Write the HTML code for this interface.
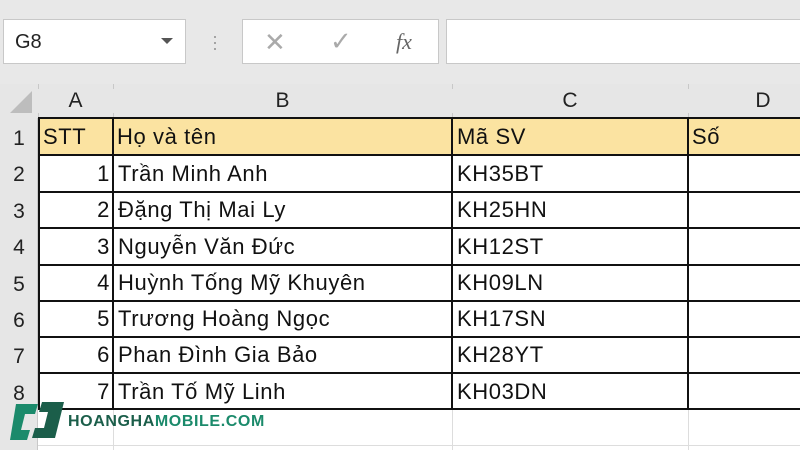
<!DOCTYPE html>
<html><head><meta charset="utf-8"><style>
*{margin:0;padding:0;box-sizing:border-box}
body{width:800px;height:450px;overflow:hidden;background:#fff;font-family:"Liberation Sans","DejaVu Sans",sans-serif;position:relative}
.a{position:absolute}
.top{left:0;top:0;width:800px;height:84px;background:#e8e8e8}
.box{background:#fff;border:1px solid #c8c8c8}
.hdr{background:#e6e6e6;color:#222;font-size:21px;text-align:center}
.cell{font-size:22px;letter-spacing:0.6px;color:#111;line-height:36px;white-space:nowrap}
.h{position:absolute;height:2px;background:#111}
.v{position:absolute;width:2px;background:#111}
</style></head><body>
<div class="a top"></div>
<div class="a box" style="left:3px;top:19px;width:183px;height:45px"></div>
<div class="a" style="left:15px;top:31px;font-size:20px;color:#222">G8</div>
<div class="a" style="left:161px;top:38px;width:0;height:0;border-left:6px solid transparent;border-right:6px solid transparent;border-top:6px solid #555"></div>
<div class="a" style="left:212px;top:33px;color:#999;font-size:18px;line-height:6px">·<br>·<br>·</div>
<div class="a box" style="left:242px;top:19px;width:197px;height:45px"></div>
<div class="a" style="left:264px;top:27px;font-size:26px;color:#aaa">✕</div>
<div class="a" style="left:330px;top:26px;font-size:26px;color:#aaa">✓</div>
<div class="a" style="left:396px;top:29px;font-size:22px;color:#666;font-family:'Liberation Serif',serif;font-style:italic">fx</div>
<div class="a box" style="left:446px;top:19px;width:360px;height:45px"></div>

<div class="a hdr" style="left:0;top:84px;width:800px;height:34px"></div>
<div class="a hdr" style="left:0;top:118px;width:38px;height:332px"></div>
<div class="a" style="left:10px;top:91px;width:0;height:0;border-left:22px solid transparent;border-bottom:22px solid #bdbdbd"></div>
<div class="a" style="left:38px;top:84px;width:1px;height:34px;background:#c8c8c8"></div>
<div class="a" style="left:113px;top:84px;width:1px;height:34px;background:#c8c8c8"></div>
<div class="a" style="left:452px;top:84px;width:1px;height:34px;background:#c8c8c8"></div>
<div class="a" style="left:688px;top:84px;width:1px;height:34px;background:#c8c8c8"></div>
<div class="a hdr" style="left:38px;top:89px;width:75px">A</div>
<div class="a hdr" style="left:113px;top:89px;width:339px">B</div>
<div class="a hdr" style="left:452px;top:89px;width:236px">C</div>
<div class="a hdr" style="left:688px;top:89px;width:150px">D</div>

<div class="a" style="left:0;top:121px;width:38px;font-size:21px;color:#222;line-height:36.4px;text-align:center">1<br>2<br>3<br>4<br>5<br>6<br>7<br>8</div>
<div class="a" style="left:37px;top:118px;width:1px;height:332px;background:#c8c8c8"></div>

<div class="a" style="left:38px;top:118px;width:762px;height:37px;background:#fbe3a1"></div>

<div class="a" style="left:38px;top:445px;width:762px;height:1px;background:#ddd"></div>
<div class="a" style="left:113px;top:409px;width:1px;height:41px;background:#ddd"></div>
<div class="a" style="left:452px;top:409px;width:1px;height:41px;background:#ddd"></div>
<div class="a" style="left:688px;top:409px;width:1px;height:41px;background:#ddd"></div>

<div class="h" style="left:38px;top:117px;width:762px"></div>
<div class="h" style="left:38px;top:154px;width:762px"></div>
<div class="h" style="left:38px;top:191px;width:762px"></div>
<div class="h" style="left:38px;top:227px;width:762px"></div>
<div class="h" style="left:38px;top:264px;width:762px"></div>
<div class="h" style="left:38px;top:300px;width:762px"></div>
<div class="h" style="left:38px;top:336px;width:762px"></div>
<div class="h" style="left:38px;top:372px;width:762px"></div>
<div class="h" style="left:38px;top:408px;width:762px"></div>
<div class="v" style="left:38px;top:117px;height:293px"></div>
<div class="v" style="left:112px;top:117px;height:293px"></div>
<div class="v" style="left:451px;top:117px;height:293px"></div>
<div class="v" style="left:687px;top:117px;height:293px"></div>

<div class="a cell" style="left:43px;top:119px">STT</div>
<div class="a cell" style="left:117px;top:119px">Họ và tên</div>
<div class="a cell" style="left:457px;top:119px">Mã SV</div>
<div class="a cell" style="left:692px;top:119px">Số</div>

<div class="a cell" style="left:40px;top:156px;width:70px;text-align:right;line-height:36.3px">1<br>2<br>3<br>4<br>5<br>6<br>7</div>
<div class="a cell" style="left:118px;top:156px;line-height:36.3px">Trần Minh Anh<br>Đặng Thị Mai Ly<br>Nguyễn Văn Đức<br>Huỳnh Tống Mỹ Khuyên<br>Trương Hoàng Ngọc<br>Phan Đình Gia Bảo<br>Trần Tố Mỹ Linh</div>
<div class="a cell" style="left:457px;top:156px;line-height:36.3px">KH35BT<br>KH25HN<br>KH12ST<br>KH09LN<br>KH17SN<br>KH28YT<br>KH03DN</div>

<svg class="a" style="left:8px;top:400px" width="58" height="42" viewBox="0 0 58 42">
<path d="M8 4 H30 L27 14 H17 L13 30 H22 L19 40 H2 Z" fill="#1b8a6b"/>
<path d="M34 2 H56 L47 38 H24 L27 28 H36 L40 12 H31 Z" fill="#1b5e4a"/>
</svg>
<div class="a" style="left:68px;top:413px;font-size:16px;font-weight:bold;letter-spacing:0.6px;color:#1b5e4a;white-space:nowrap">HOANGHA<span style="color:#1b8a6b">MOBILE.COM</span></div>
</body></html>
